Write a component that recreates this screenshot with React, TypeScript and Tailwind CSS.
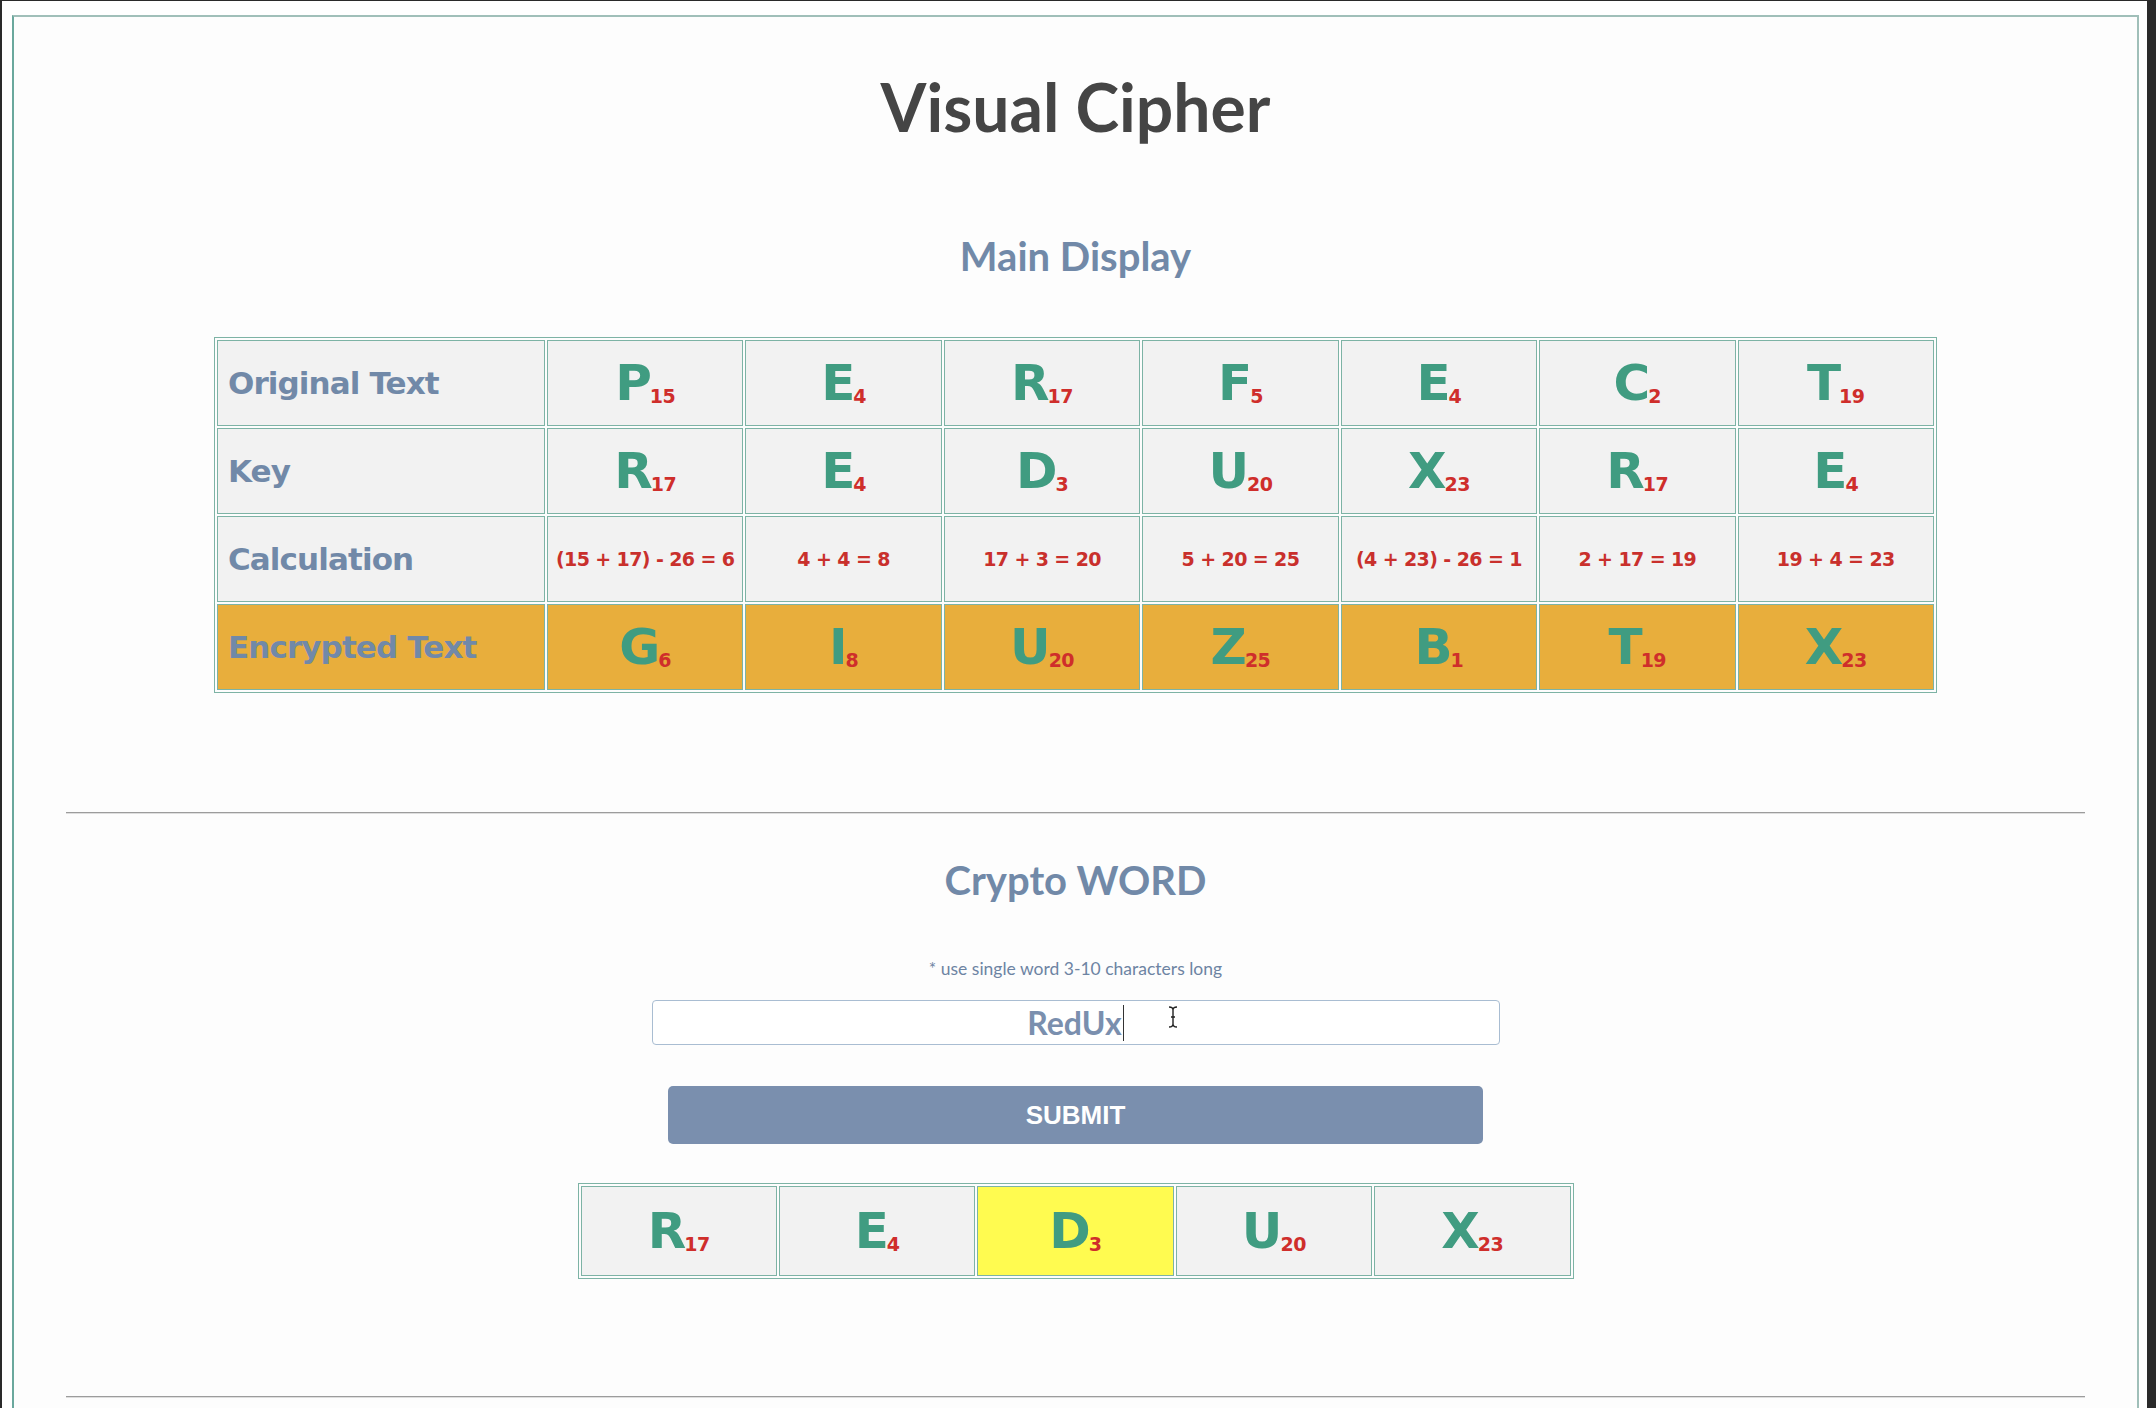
import React from 'react';

type Cell = [string, number];

const original: Cell[] = [['P', 15], ['E', 4], ['R', 17], ['F', 5], ['E', 4], ['C', 2], ['T', 19]];
const keyRow: Cell[] = [['R', 17], ['E', 4], ['D', 3], ['U', 20], ['X', 23], ['R', 17], ['E', 4]];
const calcs = [
  '(15 + 17) - 26 = 6',
  '4 + 4 = 8',
  '17 + 3 = 20',
  '5 + 20 = 25',
  '(4 + 23) - 26 = 1',
  '2 + 17 = 19',
  '19 + 4 = 23',
];
const encrypted: Cell[] = [['G', 6], ['I', 8], ['U', 20], ['Z', 25], ['B', 1], ['T', 19], ['X', 23]];
const word: Cell[] = [['R', 17], ['E', 4], ['D', 3], ['U', 20], ['X', 23]];

function Glyph({ ch, n }: { ch: string; n: number }) {
  return (
    <span className="inline-flex items-baseline">
      <span className="text-[50px] leading-none text-[#409c81]">{ch}</span>
      <span className="relative top-[3px] -ml-[2px] text-[19px] leading-none tracking-[-0.5px] text-[#cf2e2b]">{n}</span>
    </span>
  );
}

const cellBase = 'border border-[#7db3a5] text-center align-middle';

function Label({ text, orange }: { text: string; orange?: boolean }) {
  return (
    <td
      className={`${cellBase} h-[86px] pl-[10px] text-left text-[31px] tracking-[-0.9px] text-[#7189a8] ${
        orange ? 'bg-[#e8ae3c]' : 'bg-[#f2f2f2]'
      }`}
    >
      {text}
    </td>
  );
}

function Hr() {
  return <div className="mx-[52px] border-t border-b border-t-[#9c9c9c] border-b-[#dedede]" />;
}

export default function App() {
  return (
    <div className="h-[1408px] overflow-hidden bg-[#2a2a2a] pt-[1px] pl-[2px] pr-[9px]">
      <div className="h-[1500px] bg-white pt-[14px] pl-[10px] pr-[8px]">
        <div className="h-[1600px] border-2 border-[#a0bfb9] border-l-[#6aa89d] bg-[#fdfdfd] font-['Lato',sans-serif]">
          <h1 className="mt-[50px] text-center text-[66px] font-bold leading-[80px] text-[#454545]">Visual Cipher</h1>

          <h2 className="mt-[85px] text-center text-[40px] font-bold leading-[48px] text-[#7189a8]">Main Display</h2>

          <table className="mx-auto mt-[57px] w-[1723px] table-fixed border-separate border-spacing-[2px] border border-[#7db3a5] font-['DejaVu_Sans',sans-serif] font-bold">
            <colgroup>
              <col className="w-[328px]" />
              <col />
              <col />
              <col />
              <col />
              <col />
              <col />
              <col />
            </colgroup>
            <tbody>
              <tr>
                <Label text="Original Text" />
                {original.map(([c, n], i) => (
                  <td key={i} className={`${cellBase} bg-[#f2f2f2]`}>
                    <Glyph ch={c} n={n} />
                  </td>
                ))}
              </tr>
              <tr>
                <Label text="Key" />
                {keyRow.map(([c, n], i) => (
                  <td key={i} className={`${cellBase} bg-[#f2f2f2]`}>
                    <Glyph ch={c} n={n} />
                  </td>
                ))}
              </tr>
              <tr>
                <Label text="Calculation" />
                {calcs.map((t, i) => (
                  <td key={i} className={`${cellBase} bg-[#f2f2f2] text-[19px] tracking-[-0.6px] text-[#c9302c]`}>
                    {t}
                  </td>
                ))}
              </tr>
              <tr>
                <Label text="Encrypted Text" orange />
                {encrypted.map(([c, n], i) => (
                  <td key={i} className={`${cellBase} bg-[#e8ae3c]`}>
                    <Glyph ch={c} n={n} />
                  </td>
                ))}
              </tr>
            </tbody>
          </table>

          <div className="mt-[119px]">
            <Hr />
          </div>

          <h2 className="mt-[42px] text-center text-[40px] font-bold leading-[48px] text-[#7189a8]">Crypto WORD</h2>

          <p className="mt-[55px] text-center text-[17.5px] leading-[20px] text-[#6d84a3]">* use single word 3-10 characters long</p>

          <div className="relative mx-auto mt-[21px] flex h-[45px] w-[848px] items-center justify-center rounded-[4px] border border-[#a9bdd2] bg-white">
            <span className="text-[32px] font-bold leading-none text-[#7a8fae]">RedUx</span>
            <span className="ml-[1px] h-[36px] w-[1px] bg-[#333]" />
            <svg className="absolute left-[514px] top-[5px]" width="12" height="22" viewBox="0 0 12 22">
              <path d="M2 1 Q6 1 6 4 Q6 1 10 1 M6 4 V18 M2 21 Q6 21 6 18 Q6 21 10 21 M4 11 H8" fill="none" stroke="#222" strokeWidth="1.4" />
            </svg>
          </div>

          <button className="mx-auto mt-[41px] flex h-[58px] w-[815px] items-center justify-center rounded-[5px] bg-[#7a8fae] font-['Liberation_Sans',sans-serif] text-[26px] font-bold text-white">
            SUBMIT
          </button>

          <table className="mx-auto mt-[39px] w-[996px] table-fixed border-separate border-spacing-[2px] border border-[#7db3a5] font-['DejaVu_Sans',sans-serif] font-bold">
            <tbody>
              <tr>
                {word.map(([c, n], i) => (
                  <td key={i} className={`${cellBase} h-[90px] ${i === 2 ? 'bg-[#fffb50]' : 'bg-[#f2f2f2]'}`}>
                    <Glyph ch={c} n={n} />
                  </td>
                ))}
              </tr>
            </tbody>
          </table>

          <div className="mt-[117px]">
            <Hr />
          </div>
        </div>
      </div>
    </div>
  );
}
